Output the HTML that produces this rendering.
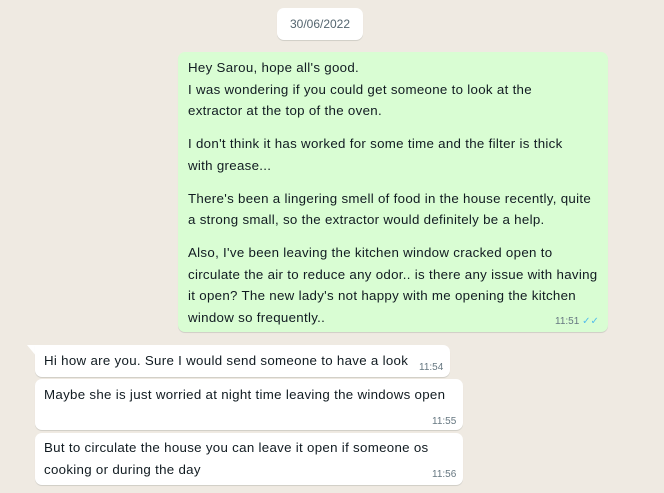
<!DOCTYPE html>
<html><head><style>
body{margin:0;width:664px;height:493px;background:#efeae2;font-family:"Liberation Sans",sans-serif;color:#111b21;position:relative;overflow:hidden}
.b{position:absolute;border-radius:7px;box-shadow:0 1px 0.5px rgba(11,20,26,.13);font-size:13.3px;letter-spacing:0.3px;line-height:21.5px;white-space:nowrap}
.t{position:absolute;font-size:10px;color:#667781;line-height:12px;letter-spacing:0}
p{margin:11.5px 0 0}p:first-child{margin:0}
</style></head><body>
<div class="b" style="left:277px;top:8px;width:86px;height:32px;background:#fff;text-align:center;line-height:32px;font-size:12px;letter-spacing:0;color:#54656f">30/06/2022</div>
<div class="b" style="left:178px;top:52px;width:430px;height:280px;background:#d9fdd3;">
<div style="position:absolute;left:10px;top:5px"><p>Hey Sarou, hope all's good.<br>I was wondering if you could get someone to look at the<br>extractor at the top of the oven.</p><p>I don't think it has worked for some time and the filter is thick<br>with grease...</p><p>There's been a lingering smell of food in the house recently, quite<br>a strong small, so the extractor would definitely be a help.</p><p>Also, I've been leaving the kitchen window cracked open to<br>circulate the air to reduce any odor.. is there any issue with having<br>it open? The new lady's not happy with me opening the kitchen<br>window so frequently..</p></div>
<div class="t" style="left:377px;top:264px">11:51 <span style="color:#53bdeb">✓✓</span></div>
</div>
<svg style="position:absolute;left:27px;top:345px" width="10" height="12"><path d="M0 0H10V12Z" fill="#fff"/></svg>
<div class="b" style="left:35px;top:345px;width:415px;height:32px;background:#fff;border-top-left-radius:0">
<div style="position:absolute;left:9px;top:5px">Hi how are you. Sure I would send someone to have a look</div>
<div class="t" style="left:384px;top:17px">11:54</div></div>
<div class="b" style="left:35px;top:379px;width:428px;height:51px;background:#fff">
<div style="position:absolute;left:9px;top:5px">Maybe she is just worried at night time leaving the windows open</div>
<div class="t" style="left:397px;top:37px">11:55</div></div>
<div class="b" style="left:35px;top:433px;width:428px;height:52px;background:#fff">
<div style="position:absolute;left:9px;top:4px">But to circulate the house you can leave it open if someone os<br>cooking or during the day</div>
<div class="t" style="left:397px;top:36px">11:56</div></div>
</body></html>
